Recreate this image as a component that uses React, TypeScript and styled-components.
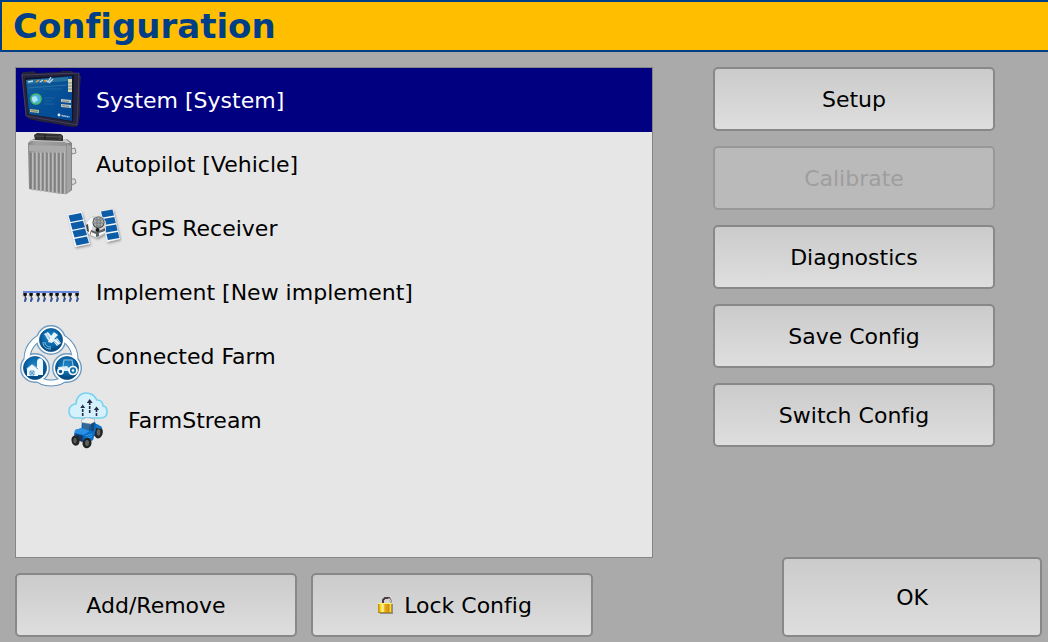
import React, { useState } from "react";
import styled, { createGlobalStyle } from "styled-components";

const GlobalStyle = createGlobalStyle`
  * { box-sizing: border-box; }
  body {
    margin: 0;
    background: #aaa;
    color: #000;
    font-family: "DejaVu Sans", Verdana, sans-serif;
    font-size: 22px;
    font-variant-ligatures: none;
    line-height: 26px;
  }
`;

const Page = styled.div`
  display: flex;
  flex-direction: column;
  min-height: 100vh;
`;

const Header = styled.header`
  padding: 4px 11px;
  border: 2px solid #003e87;
  border-right: 0;
  background: #ffbf00;
`;

const Title = styled.h1`
  margin: 0;
  color: #003e87;
  font-size: 34px;
  font-weight: bold;
  line-height: 40px;
`;

const Main = styled.main`
  flex: 1;
  display: flex;
  gap: 60px;
  padding: 15px 6px 5px 15px;
`;

const ListPane = styled.section`
  flex: 1;
  display: flex;
  flex-direction: column;
  gap: 15px;
`;

const ItemList = styled.ul`
  flex: 1;
  margin: 0;
  padding: 0;
  border: 1px solid #858585;
  background: #e6e6e6;
  list-style: none;
`;

const ItemButton = styled.button<{ $selected: boolean; $nested: boolean }>`
  display: flex;
  align-items: center;
  gap: ${(p) => (p.$nested ? 9 : 12)}px;
  width: 100%;
  height: 64px;
  padding: 0 0 0 ${(p) => (p.$nested ? 50 : 0)}px;
  border: 0;
  background: ${(p) => (p.$selected ? "#000080" : "transparent")};
  color: ${(p) => (p.$selected ? "#fff" : "#000")};
  font: inherit;
  font-variant-ligatures: none;
  text-align: left;
`;

const ItemLabel = styled.span`
  padding-top: 2px;
`;

const ListActions = styled.div`
  display: flex;
  gap: 14px;
`;

const ActionPane = styled.section`
  display: flex;
  flex-direction: column;
  justify-content: space-between;
  width: 329px;
`;

const ActionStack = styled.div`
  display: flex;
  flex-direction: column;
  gap: 15px;
`;

const Button = styled.button<{ $primary?: boolean }>`
  display: flex;
  align-items: center;
  justify-content: center;
  gap: 8px;
  align-self: ${(p) => (p.$primary ? "flex-end" : "auto")};
  width: ${(p) => (p.$primary ? 260 : 282)}px;
  height: ${(p) => (p.$primary ? 80 : 64)}px;
  padding: 2px 0 0;
  border: 2px solid #888;
  border-radius: 5px;
  background: linear-gradient(#cbcbcb, #dedede);
  color: #000;
  font: inherit;
  font-variant-ligatures: none;

  &:disabled {
    border-color: #989898;
    background: #bababa;
    color: #9e9e9e;
  }
`;

const Icon = styled.svg`
  display: block;
  flex: none;
`;

const DisplayIcon = () => (
  <Icon width="68" height="64" viewBox="0 0 68 64" aria-hidden="true">
    <defs>
      <linearGradient id="screen" x1="0" y1="0" x2="1" y2="1">
        <stop offset="0" stopColor="#17639b" />
        <stop offset="0.4" stopColor="#075397" />
        <stop offset="1" stopColor="#004694" />
      </linearGradient>
    </defs>
    <path d="M11 4l7-1 2 2 24-1 2-1 10 0 2 2 5 1 2 3-1 9 0 29-2 11-4 1-9-1-3-1-24-4-9-2-3-3-5-42 2-2z" fill="#24233b" />
    <path d="M6 7l57-2-2 52-51-9z" fill="#25233d" stroke="#4a4865" strokeWidth="0.8" />
    <path d="M9 10l49-3-1 47-44-8z" fill="#111429" />
    <path d="M10 12l46-4 0 45-43-7z" fill="url(#screen)" />
    <path d="M10 12l42-3 0 4-41 3z" fill="#2671a0" />
    <path d="M12 14l5-1M24 14l3-2M30 12l2 2 3-5M33 15l4-4" stroke="#c4dbeb" strokeWidth="1.3" fill="none" />
    <path d="M20 14l3-2" stroke="#dba540" strokeWidth="1.5" />
    <circle cx="29" cy="13" r="1.3" fill="#c89139" />
    <path d="M12 20l39-3" stroke="#387eab" strokeWidth="0.7" />
    <path d="M52 11h4v13h-4z" fill="#d9d3a8" />
    <path d="M52 15h4M52 18h4M52 21h4" stroke="#4f83a1" strokeWidth="0.8" />
    <circle cx="20" cy="31" r="5.2" fill="#48b2e2" />
    <circle cx="20" cy="31" r="5.2" fill="none" stroke="#48bb54" strokeWidth="1.3" />
    <path d="M16 29l4-1 2 4-4 3-2-3z" fill="#c5effa" opacity=".8" />
    <path d="M28 30h11M28 33h8M28 36h10M27 21l19 0" stroke="#216aa3" strokeWidth="0.8" />
    <path d="M45 31l10 1v3l-10-1zM45 36l10 1v3l-10-1z" fill="#c6c7b2" />
    <path d="M46 33l7 .5M46 37.5l7 1" stroke="#637e92" strokeWidth="0.8" />
    <path d="M14 41l9 1v3l-9-1z" fill="#c0bd86" />
    <path d="M15 42.5l7 1" stroke="#57738a" strokeWidth="0.7" />
    <circle cx="43" cy="47" r="1.4" fill="#e5f2fa" />
    <path d="M45.5 47.5l8 1.5" stroke="#bcd3e7" strokeWidth="1.6" strokeDasharray="1.4 .5" />
  </Icon>
);

const ControllerIcon = () => (
  <Icon width="68" height="64" viewBox="0 0 68 64" aria-hidden="true">
    <defs>
      <linearGradient id="case" x1="0" x2="1">
        <stop offset="0" stopColor="#858585" />
        <stop offset="0.2" stopColor="#a2a2a2" />
        <stop offset="1" stopColor="#929292" />
      </linearGradient>
    </defs>
    <path d="M55 17l4-1 1 5-4 1zM55 47l4 0 1 4-4 2z" fill="#ddd" stroke="#8b8b8b" />
    <path d="M15 8l3-1 33 0 5 4 0 47-4 3-5 1-33-5-1-47z" fill="#858585" />
    <path d="M14 8l36-1 4 4-42 2z" fill="#c8c8c8" />
    <path d="M12 11l3-2 34 1 2 5 0 47-4 0-34-5z" fill="url(#case)" />
    <path d="M51 12l4 2 0 43-4 5z" fill="#a2a2a2" />
    <path d="M13 13l37 1v7l-37-2z" fill="#aaa" />
    {[15, 19, 23, 27, 31, 35, 39, 43, 47].map((x) => (
      <g key={x}>
        <path d={`M${x} 21v${34 + x / 8}`} stroke="#747474" strokeWidth="1.3" />
        <path d={`M${x + 1.6} 21v${35 + x / 8}`} stroke="#bcbcbc" strokeWidth="1.5" strokeLinecap="round" />
      </g>
    ))}
    <path d="M18 3l3-2 24 1 2 2 0 5-28-1z" fill="#303030" />
    <path d="M19 4l27 1M44 3v5" stroke="#505050" strokeWidth="1" />
    <path d="M29 2v6" stroke="#161616" />
  </Icon>
);

const SatelliteIcon = () => (
  <Icon width="56" height="64" viewBox="0 0 56 64" aria-hidden="true">
    <defs>
      <filter id="panelShadow" x="-20%" y="-20%" width="150%" height="150%">
        <feDropShadow dx="1" dy="1.5" stdDeviation="1" floodColor="#555" floodOpacity=".55" />
      </filter>
    </defs>
    <g filter="url(#panelShadow)">
      <path d="M17 34l7-3M39 31l4-1" stroke="#343a40" strokeWidth="2" />
      <path d="M1.500 19l14-3.500 8.500 32.500-15 3z" fill="#f4f8fa" />
      <path d="M34 15l13-2 7 30-13 3z" fill="#f4f8fa" />
      <g fill="#075ca8">
        {[0, 1, 2, 3].map((n) => (
          <g key={n}>
            <path d="M2.500 19.500l12.500-2.500 2 6.500-12.500 2.500z" transform={`translate(${n * 2} ${n * 7.800})`} />
            <path d="M35 15.500l11.500-2 1.500 6-11.500 2z" transform={`translate(${n * 1.800} ${n * 7.500})`} />
          </g>
        ))}
      </g>
      <path d="M21 25l5-5 10 0 4 6 0 11-9 5-8-4-3-7z" fill="#d2d4d4" />
      <path d="M21 26l5-5 2 5-4 13-4-5z" fill="#fafafa" />
      <path d="M20 29l2-1 1 8-2-1z" fill="#424446" />
      <path d="M25 34l6 2 8-4 0 5-8 4-7-3z" fill="#5c5e60" />
      <path d="M25 36l5 2v3l-5-2zM33 37l6-2v2l-6 3z" fill="#f7f7f7" />
      <circle cx="32.500" cy="26.500" r="6" fill="#3b3d3f" />
      <circle cx="32.500" cy="26.200" r="5.200" fill="#a9acac" />
      <path d="M29 24h7M28 27h9M30 30h5M31 22v9M34 22v9" stroke="#686c6e" strokeWidth=".7" />
      <circle cx="31.500" cy="34" r="2" fill="#17191b" />
    </g>
  </Icon>
);

const ImplementIcon = () => (
  <Icon width="68" height="64" viewBox="0 0 68 64" aria-hidden="true">
    <path d="M7 32h56" stroke="#3d67dd" strokeWidth="1.6" />
    {[9, 15, 22, 28, 35, 41, 48, 54, 61].map((x) => (
      <g key={x}>
        <path d={`M${x - 1.6} 33h3.400v2l-1 1h-1.600l-1-1z`} fill="#111" />
        <path d={`M${x - 2} 35.500l1 1M${x + 1} 36l1-1`} stroke="#777" />
        <path d={`M${x + 0.3} 36v2`} stroke="#333" strokeWidth="1.2" />
        <path d={`M${x + 0.3} 37l1.700 1-.5 2-1 2h-1.400v-2z`} fill="#3a5597" />
      </g>
    ))}
  </Icon>
);

const FarmIcon = () => (
  <Icon width="68" height="64" viewBox="0 0 68 64" aria-hidden="true">
    <defs>
      <radialGradient id="badge" cy="0.4">
        <stop offset="0" stopColor="#2387c5" />
        <stop offset="0.65" stopColor="#0867aa" />
        <stop offset="1" stopColor="#02477e" />
      </radialGradient>
    </defs>
    <g fill="none">
      <circle cx="35" cy="35" r="24" stroke="#5f8fb8" strokeWidth="7" />
      <g stroke="#6d9bc1" strokeWidth="2">
        <circle cx="35" cy="16" r="14" />
        <circle cx="19" cy="44" r="14" />
        <circle cx="51" cy="44" r="14" />
      </g>
      <circle cx="35" cy="35" r="24" stroke="#fff" strokeWidth="5" />
    </g>
    <g fill="url(#badge)" stroke="#fff" strokeWidth="2">
      <circle cx="35" cy="16" r="12.6" />
      <circle cx="19" cy="44" r="12.6" />
      <circle cx="51" cy="44" r="12.6" />
    </g>
    <g fill="none" stroke="#1b5b90" strokeWidth=".8">
      <circle cx="35" cy="16" r="11.5" />
      <circle cx="19" cy="44" r="11.5" />
      <circle cx="51" cy="44" r="11.5" />
    </g>
    <g fill="#eaf6fc">
      <path d="M28 10l4-2 4 5-4 3zM37 17l4-3 4 5-4 3zM38 8l4 3-4 4-3-3zM33 14l3-2 3 3-3 4-4-1z" />
      <path d="M29 11l5 4M30 9l4 5M38 17l4 4M40 15l4 4" stroke="#5aa2ce" strokeWidth=".6" />
    </g>
    <path d="M27 18c0 5 3 7 8 7M29 18c0 3 2 5 6 5" fill="none" stroke="#8ecbe7" strokeWidth="1" />
    <path d="M11 44l5-4 6 4v8H11zM21 51V38c0-5 6-5 6 0v13z" fill="#eef8fd" />
    <path d="M10 45l6-5 6 5M14 47h4v4h-4zM14 47l4 4M18 47l-4 4" fill="none" stroke="#3a8dc5" strokeWidth=".8" />
    <path d="M47 43l1-7h8l1 6" fill="none" stroke="#8fc3e0" strokeWidth="1.1" />
    <path d="M42 43l9-1 3 3 6-1 1 3H43z" fill="#d7edf7" />
    <circle cx="44.5" cy="47.5" r="2.6" fill="#08599a" stroke="#fff" strokeWidth="1.6" />
    <circle cx="57" cy="46.5" r="4" fill="#1873b1" stroke="#fff" strokeWidth="1.7" />
    <circle cx="57" cy="46.5" r="1.2" fill="#fff" />
  </Icon>
);

const StreamIcon = () => (
  <Icon width="53" height="64" viewBox="0 0 53 64" aria-hidden="true">
    <path
      d="M10 30C5 30 3 27 3 23c0-4 3-7 7-7 0-6 4-11 10-11 5 0 9 3 11 7 4 0 6 3 6 6 3 0 4 3 4 6 0 3-2 6-6 6z"
      fill="#d5f1fb"
      stroke="#79d2f2"
      strokeWidth="1.7"
      strokeLinejoin="round"
    />
    <path d="M16.7 28V18M23.7 25V13M30.5 28V20" stroke="#272b49" strokeWidth="1.6" strokeDasharray="3 1" />
    <path d="M14.3 20l2.400-3.600 2.400 3.600zM20.700 15l3-4 3 4zM27.800 22l2.700-3.600 2.700 3.600z" fill="#272b49" />
    <path d="M17 33l9-1 5 5 4 2 1 7-8 2-12-8z" fill="#12335c" />
    <ellipse cx="32.500" cy="44.500" rx="4.300" ry="6" fill="#242424" transform="rotate(8 32.500 44.500)" />
    <ellipse cx="32.500" cy="44.500" rx="1.800" ry="3.200" fill="#606564" />
    <path d="M25 37l6-1 5 3-1 2-5-1-2 9-4-2z" fill="#1474ca" />
    <path d="M17 35l7 1-1 8-7-2z" fill="#356894" />
    <path d="M25 36l3-1 0 8-3 1z" fill="#1b4772" />
    <path d="M16.500 34l-.5 8M24.500 36v8M28.500 34l1 8" stroke="#0964b3" strokeWidth="1.3" />
    <path d="M15.500 32l5-2.500 8 1.500v3l-4 2-9-1.500z" fill="#eef0ef" stroke="#92999c" strokeWidth=".5" />
    <path d="M9 42l7-2 8 2 4 2-1 8-8 3-9-4-2-4z" fill="#0b61b8" />
    <path d="M9 42l7-2 8 3-6 4-9-2z" fill="#2a91e2" />
    <path d="M18 47l6-4 5 1-2 8-8 3z" fill="#0b70ca" />
    <path d="M10 46l7 2-1 6-6-3z" fill="#15355d" />
    <path d="M20 48l6-2M20 50.500l6-2" stroke="#41a8ee" strokeWidth=".8" />
    <ellipse cx="9.500" cy="52.500" rx="4" ry="5.200" fill="#242424" transform="rotate(-12 9.500 52.500)" />
    <ellipse cx="9" cy="52.500" rx="1.600" ry="2.800" fill="#595d5e" />
    <ellipse cx="21" cy="55" rx="4.500" ry="5.300" fill="#202121" transform="rotate(12 21 55)" />
    <ellipse cx="21" cy="55" rx="2" ry="3" fill="#5a6060" />
  </Icon>
);

const LockIcon = () => (
  <Icon width="24" height="24" viewBox="0 0 24 24" aria-hidden="true">
    <defs>
      <linearGradient id="brass" x1="0" x2="1">
        <stop offset="0" stopColor="#b58b00" />
        <stop offset="0.18" stopColor="#f4d323" />
        <stop offset="0.34" stopColor="#fff7ac" />
        <stop offset="0.5" stopColor="#e3ae16" />
        <stop offset="0.78" stopColor="#d98b08" />
        <stop offset="0.88" stopColor="#f9e453" />
        <stop offset="1" stopColor="#997b0a" />
      </linearGradient>
    </defs>
    <path d="M8 20V10h13v10H8z" fill="#77777a" opacity=".75" />
    <path d="M11 10V6l2-2h4l2 3v3" fill="none" stroke="#4c3c3f" strokeWidth="2" />
    <path d="M16 10V6l1-1 2 2v3" fill="none" stroke="#d8d8d8" strokeWidth="1.3" />
    <path d="M6 9h14v10H6z" fill="url(#brass)" />
    <path d="M6 9.5h14" stroke="#fff16a" />
    <path d="M6 18.5h14" stroke="#b18813" />
  </Icon>
);

const items = [
  { label: "System [System]", icon: <DisplayIcon />, nested: false },
  { label: "Autopilot [Vehicle]", icon: <ControllerIcon />, nested: false },
  { label: "GPS Receiver", icon: <SatelliteIcon />, nested: true },
  { label: "Implement [New implement]", icon: <ImplementIcon />, nested: false },
  { label: "Connected Farm", icon: <FarmIcon />, nested: false },
  { label: "FarmStream", icon: <StreamIcon />, nested: true },
];

export default function App() {
  const [selected, setSelected] = useState(0);

  return (
    <Page>
      <GlobalStyle />
      <Header>
        <Title>Configuration</Title>
      </Header>
      <Main>
        <ListPane>
          <ItemList>
            {items.map((item, index) => (
              <li key={item.label}>
                <ItemButton
                  type="button"
                  aria-pressed={index === selected}
                  $selected={index === selected}
                  $nested={item.nested}
                  onClick={() => setSelected(index)}
                >
                  {item.icon}
                  <ItemLabel>{item.label}</ItemLabel>
                </ItemButton>
              </li>
            ))}
          </ItemList>
          <ListActions>
            <Button type="button">Add/Remove</Button>
            <Button type="button">
              <LockIcon />
              Lock Config
            </Button>
          </ListActions>
        </ListPane>
        <ActionPane>
          <ActionStack>
            <Button type="button">Setup</Button>
            <Button type="button" disabled>
              Calibrate
            </Button>
            <Button type="button">Diagnostics</Button>
            <Button type="button">Save Config</Button>
            <Button type="button">Switch Config</Button>
          </ActionStack>
          <Button type="button" $primary>
            OK
          </Button>
        </ActionPane>
      </Main>
    </Page>
  );
}
